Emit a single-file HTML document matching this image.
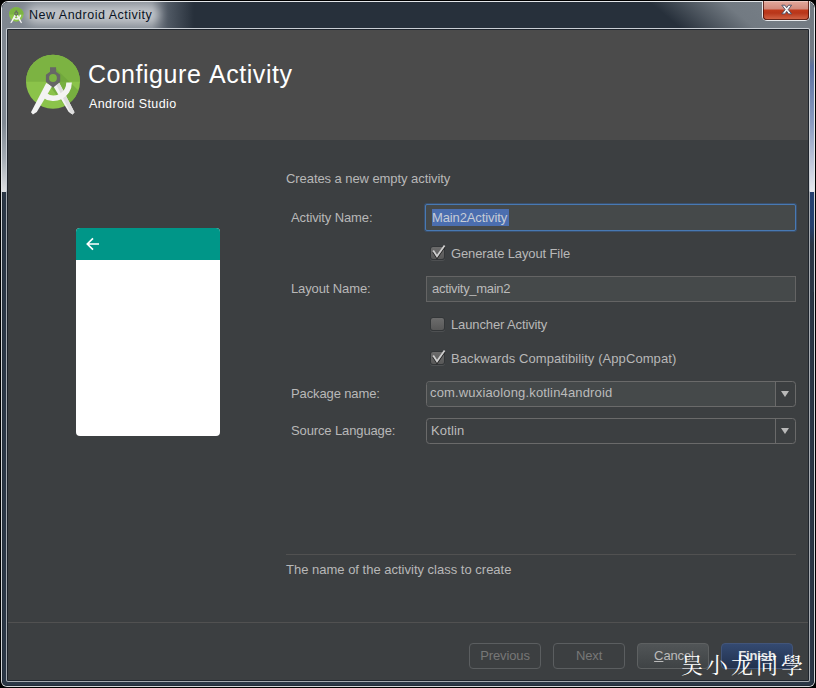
<!DOCTYPE html>
<html lang="en">
<head>
<meta charset="utf-8">
<title>New Android Activity</title>
<style>
*{box-sizing:border-box;margin:0;padding:0}
html,body{width:816px;height:688px;overflow:hidden;background:#000}
body{font-family:"Liberation Sans","Noto Sans CJK SC",sans-serif;font-size:13px;color:#bbbbbb;position:relative;letter-spacing:-0.12px}
.abs{position:absolute}
/* window frame */
#frame{left:0;top:0;width:816px;height:688px;background:#000;border-radius:8px 8px 7px 7px;overflow:hidden}
#frameline{left:1px;top:1px;width:814px;height:686px;border-radius:7px 7px 6px 6px;background:linear-gradient(180deg,#e4e7ea 0,#e4e7ea 190px,#d2d5d8 191px)}
#glass{left:2px;top:2px;width:812px;height:684px;border-radius:6px 6px 5px 5px;overflow:hidden;
 background:#2b3746;box-shadow:inset 0 0 0 1px #232d39}
#glass .tb{left:0;top:0;width:812px;height:26px;background:
 linear-gradient(90deg,#7f8790 0px,#868d96 150px,rgba(90,99,110,.8) 166px,rgba(39,48,59,0) 192px),
 linear-gradient(40deg,rgba(39,48,59,0) 436px,rgba(108,116,124,.6) 462px,#727a82 484px,#757d85 505px,#727a82 530px),
 #27303b}
#glass .lft{left:0;top:26px;width:6px;height:164px;background:linear-gradient(180deg,#7f8790 0,#7f8892 95px,#a3abb3 130px,#dcdee1 163px)}
#glass .rgt{right:0;top:26px;width:6px;height:164px;background:linear-gradient(180deg,#727a82 0,#737b86 28px,#5d71a0 38px,#8b9bc1 95px,#e6e8ee 163px)}
#glass .rgt2{right:0;top:190px;width:6px;height:100px;background:linear-gradient(180deg,#25406f 0,#25406f 34px,#2b3746 52px)}
#innerline{left:6px;top:28px;width:804px;height:654px;background:linear-gradient(180deg,#c9ced4 0,#c9ced4 163px,#a5aab0 164px);border-radius:2px}
#innerdark{left:7px;top:29px;width:802px;height:652px;background:#1e242c;border-radius:1px}
#titletext{left:29px;top:7px;font-size:12.5px;color:#0a1424;white-space:nowrap;line-height:16px;letter-spacing:.5px}
#glow{left:26px;top:5px;width:134px;height:19px;border-radius:10px;background:rgba(255,255,255,.5);filter:blur(5px)}
/* close button */
#close{left:762px;top:1px;width:48px;height:20px;border-radius:0 0 5px 5px;background:#e6e9ec}
#close i{position:absolute;left:1px;top:0;width:46px;height:19px;border-radius:0 0 4px 4px;
 background:linear-gradient(180deg,#e3a99c 0,#d28a7c 8px,#c03a1c 9px,#b8361a 12px,#d4684a 19px);
 box-shadow:inset 1px 0 0 rgba(70,15,8,.8),inset -1px 0 0 rgba(70,15,8,.8),inset 0 -1px 0 rgba(70,15,8,.75),inset 0 1px 0 rgba(255,255,255,.35)}
/* content */
#content{left:8px;top:30px;width:800px;height:650px;background:#3c3f41;overflow:hidden}
#header{left:0;top:0;width:800px;height:110px;background:#4b4b4b}
#h1{left:80px;top:29px;font-size:25px;line-height:30px;color:#ffffff;white-space:nowrap;letter-spacing:.55px;word-spacing:1.5px}
#h2{left:81px;top:66px;font-size:12.5px;line-height:16px;color:#ffffff;white-space:nowrap;letter-spacing:.4px}
.lbl{white-space:nowrap;line-height:16px;color:#b8b8b8}
.field{height:27px;background:#45494a;border:1px solid #646464}
.field span{position:absolute;left:6px;top:5px;line-height:16px;white-space:nowrap}
.cb{width:15px;height:14px;border-radius:3px;background:linear-gradient(180deg,#6c6c6c,#585858);border:1px solid #333638;box-shadow:0 1px 0 rgba(85,88,90,.7)}
.combo{height:26px;border:1px solid #6a6a6a;border-radius:3.5px;overflow:hidden}
.combo .ed{position:absolute;left:0;top:0;right:19px;bottom:0;border-right:1px solid #6a6a6a}
.combo span{position:absolute;left:4px;top:3px;line-height:16px;white-space:nowrap}
.combo .ar{position:absolute;right:6px;top:9px;width:0;height:0;border-left:4.5px solid transparent;border-right:4.5px solid transparent;border-top:6.5px solid #b9b9b9}
.btn{top:613px;width:72px;height:26px;border-radius:4px;text-align:center;line-height:24px;font-size:13px}
.btn.dis{border:1px solid #5b5e60;color:#777777}
</style>
</head>
<body>
<div id="frame" class="abs">
 <div id="frameline" class="abs"></div>
 <div id="glass" class="abs"><div class="tb abs"></div><div class="lft abs"></div><div class="rgt abs"></div><div class="rgt2 abs"></div></div>
 <div id="glow" class="abs"></div>
 <svg class="abs" style="left:7.700px;top:5.750px" width="17.100" height="18.700" viewBox="0 0 64 70">
  <circle cx="31" cy="31.700" r="27" fill="#8bc34a"/>
  <circle cx="31" cy="31.700" r="27" fill="#7cb342" clip-path="url(#cTop)"/>
  <path d="M37.300 33.100L31.200 36.100 46.700 61.900 50.600 64.600 52.500 62.300z" fill="#f3f3f3"/>
  <path d="M21.600 44.500 A15.500 15.500 0 0 0 47.100 32.600" stroke="#f3f3f3" stroke-width="5.600" fill="none"/>
  <path d="M24.200 33.100L30.300 36.100 14.800 61.900 10.900 64.600 9 62.300z" fill="#f3f3f3"/>
  <path d="M28 17.300H34.100V21.700L38.200 24.700V31.700L31.050 37.700 23.900 31.700V24.700L28 21.700z" fill="#666666"/>
  <circle cx="31" cy="28" r="3.900" fill="#7cb342"/>
 </svg>
 <div id="titletext" class="abs">New Android Activity</div>
 <div id="close" class="abs"><i></i>
  <svg class="abs" style="left:18px;top:3px" width="14" height="12" viewBox="0 0 14 12"><path d="M1.800 1.200H4.900L6.700 3.700 8.500 1.200H11.600L8.250 5.550 11.600 9.900H8.500L6.700 7.400 4.900 9.900H1.800L5.150 5.550z" fill="#f6f6f6" stroke="#474c62" stroke-width=".9" stroke-linejoin="round"/></svg>
 </div>
 <div id="innerline" class="abs"></div>
 <div id="innerdark" class="abs"></div>

 <div id="content" class="abs">
  <div id="header" class="abs"></div>
  <!-- logo -->
  <svg class="abs" style="left:14px;top:20px" width="64" height="70" viewBox="0 0 64 70">
   <defs><clipPath id="cTop"><rect x="0" y="0" width="64" height="31.7"/></clipPath></defs>
   <circle cx="31" cy="31.7" r="27" fill="#8bc34a"/>
   <circle cx="31" cy="31.7" r="27" fill="#7cb342" clip-path="url(#cTop)"/>
   <path d="M34.1 19 L56.5 40.5 A27 27 0 0 1 43 55.9 L26 34z" fill="#689f38" opacity=".55"/>
   <path d="M37.300 33.100L31.200 36.100 46.700 61.900 50.600 64.600 52.500 62.300z" fill="#f3f3f3"/>
   <path d="M37.300 33.100L34.200 34.600 48.700 63.200 50.600 64.600 52.500 62.300z" fill="#dedede"/>
   <path d="M21.600 44.500 A15.500 15.500 0 0 0 47.100 32.600" stroke="#f3f3f3" stroke-width="5.600" fill="none"/>
   <path d="M24.200 33.100L30.300 36.100 14.800 61.900 10.900 64.600 9 62.300z" fill="#f3f3f3"/>
   <path d="M28 17.300H34.100V21.700L38.200 24.700V31.700L31.050 37.700 23.900 31.700V24.700L28 21.700z" fill="#666666"/>
   <circle cx="31" cy="28" r="3.900" fill="#7cb342"/>
  </svg>
  <div id="h1" class="abs">Configure Activity</div>
  <div id="h2" class="abs">Android Studio</div>

  <!-- phone preview -->
  <div class="abs" style="left:68px;top:198px;width:144px;height:208px;border-radius:4px;background:#fff;overflow:hidden">
   <div class="abs" style="left:0;top:0;width:144px;height:32px;background:#009688"></div>
   <svg class="abs" style="left:10px;top:9px" width="14" height="14" viewBox="0 0 14 14"><path d="M13 7H2.200M7 1.300L1.300 7 7 12.700" stroke="#fff" stroke-width="1.700" fill="none"/></svg>
  </div>

  <div class="lbl abs" style="left:278px;top:141px;letter-spacing:-.07px">Creates a new empty activity</div>
  <div class="lbl abs" style="left:283px;top:180px">Activity Name:</div>
  <div class="field abs" style="left:417px;top:174px;width:371px;border:1px solid #4879b3;border-radius:2px;box-shadow:0 0 0 1px rgba(56,92,138,.6)">
   <div class="abs" style="left:6px;top:4px;width:77px;height:17px;background:#4b6eaf"></div>
   <span style="color:#c6ccd6">Main2Activity</span>
  </div>
  <div class="cb abs" style="left:422px;top:216px"></div>
  <svg class="abs" style="left:422px;top:213px" width="17" height="17" viewBox="0 0 17 17"><path d="M3.200 7.500L7 13.300 14.600 2.400" stroke="#1f1f1f" stroke-width="2" fill="none" transform="translate(0,1.300)"/><path d="M3.200 7.500L7 13.300 14.600 2.400" stroke="#cdcdcd" stroke-width="1.800" fill="none"/></svg>
  <div class="lbl abs" style="left:443px;top:216px">Generate Layout File</div>

  <div class="lbl abs" style="left:283px;top:251px">Layout Name:</div>
  <div class="field abs" style="left:418px;top:246px;width:370px;height:26px"><span style="top:4px;left:5px;letter-spacing:-.3px">activity_main2</span></div>

  <div class="cb abs" style="left:422px;top:287px"></div>
  <div class="lbl abs" style="left:443px;top:287px">Launcher Activity</div>

  <div class="cb abs" style="left:422px;top:321px"></div>
  <svg class="abs" style="left:422px;top:318px" width="17" height="17" viewBox="0 0 17 17"><path d="M3.200 7.500L7 13.300 14.600 2.400" stroke="#1f1f1f" stroke-width="2" fill="none" transform="translate(0,1.300)"/><path d="M3.200 7.500L7 13.300 14.600 2.400" stroke="#cdcdcd" stroke-width="1.800" fill="none"/></svg>
  <div class="lbl abs" style="left:443px;top:321px;letter-spacing:.08px">Backwards Compatibility (AppCompat)</div>

  <div class="lbl abs" style="left:283px;top:356px">Package name:</div>
  <div class="combo abs" style="left:418px;top:351px;width:370px"><div class="ed" style="background:#45494a"></div><span style="letter-spacing:.16px;left:3px">com.wuxiaolong.kotlin4android</span><div class="ar"></div></div>

  <div class="lbl abs" style="left:283px;top:393px">Source Language:</div>
  <div class="combo abs" style="left:418px;top:388px;width:370px"><div class="ed"></div><span style="left:4px;top:4px;letter-spacing:.15px">Kotlin</span><div class="ar"></div></div>

  <div class="abs" style="left:278px;top:524px;width:510px;height:1px;background:#515151"></div>
  <div class="lbl abs" style="left:278px;top:532px;letter-spacing:0">The name of the activity class to create</div>

  <div class="abs" style="left:0;top:592px;width:800px;height:1px;background:#515151"></div>
  <div class="btn dis abs" style="left:461px">Previous</div>
  <div class="btn dis abs" style="left:545px">Next</div>
  <div class="btn abs" style="left:629px;border:1px solid #5e6162;background:linear-gradient(180deg,#515557,#3f4345);color:#bbbbbb"><span style="position:relative;left:1px"><u>C</u>ancel</span></div>
  <div class="btn abs" style="left:713px;border:1px solid #42557a;background:linear-gradient(180deg,#344a71,#22314d);color:#e6e6e6;font-weight:bold">Finish</div>
  <div class="abs" style="left:673px;top:621px;font-family:'Liberation Serif','Noto Serif CJK SC',serif;font-weight:400;font-size:22px;line-height:30px;letter-spacing:3px;color:#fff;white-space:nowrap">吴小龙同學</div>
 </div>
</div>
</body>
</html>
